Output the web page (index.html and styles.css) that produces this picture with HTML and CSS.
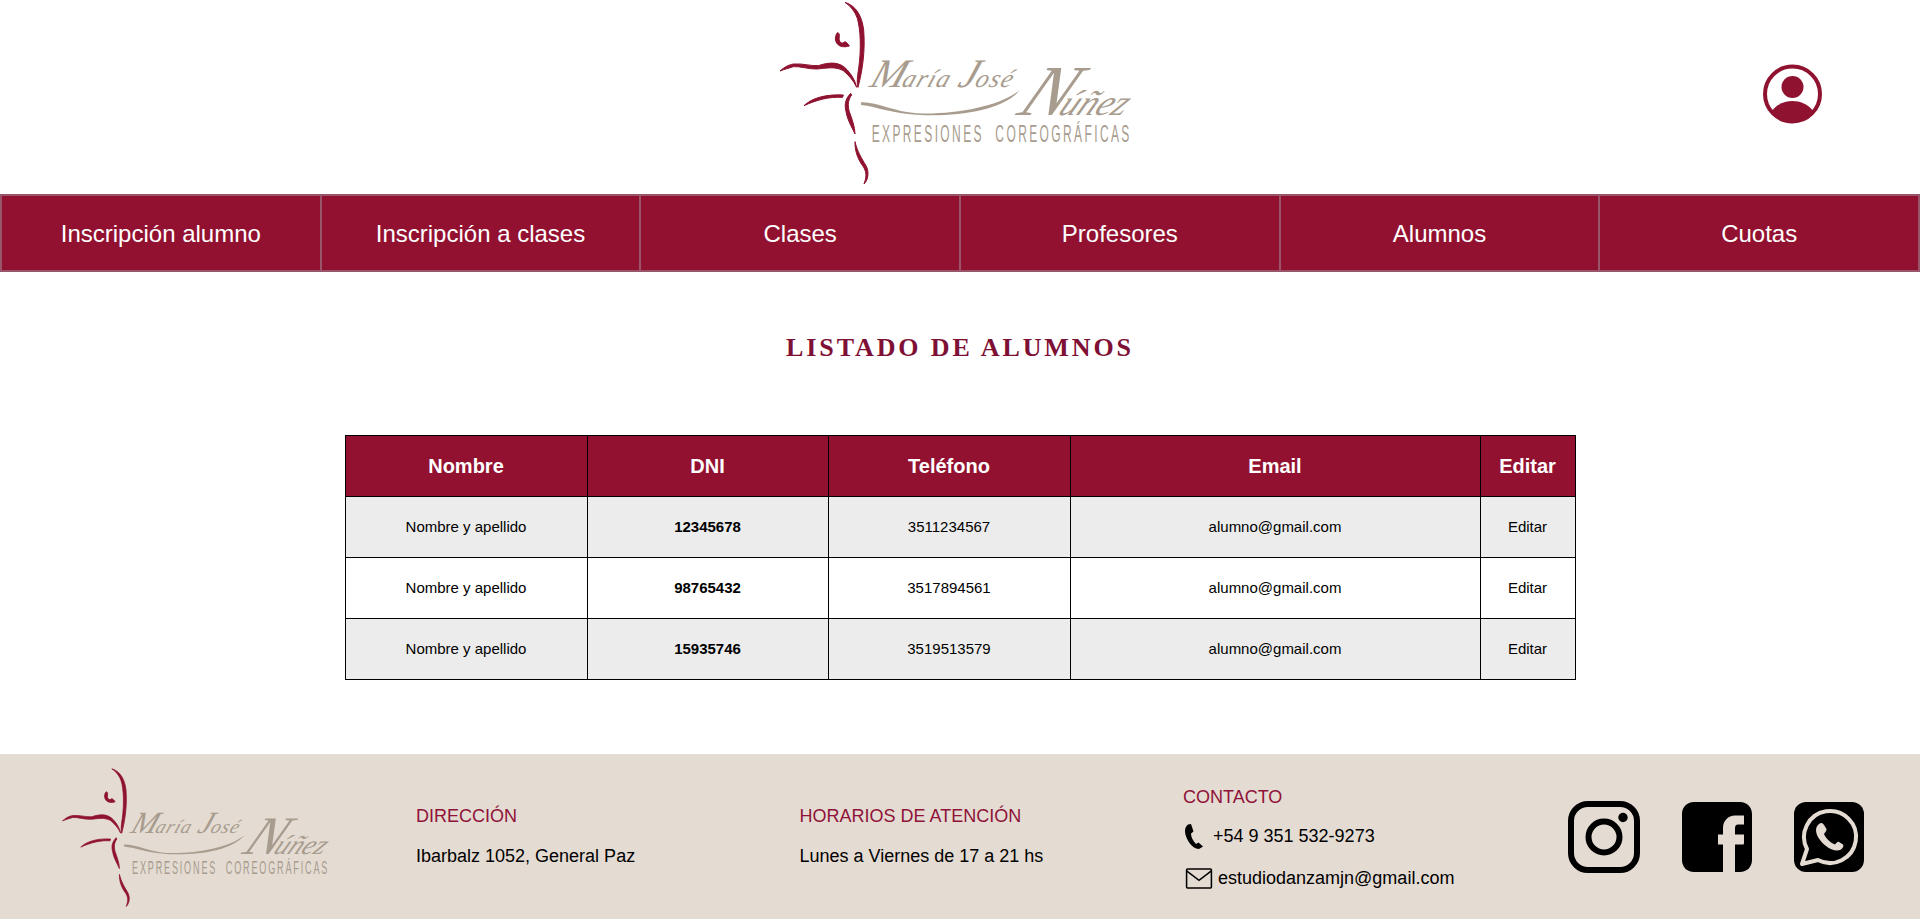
FILE: index.html
```html
<!DOCTYPE html>
<html lang="es">
<head>
<meta charset="utf-8">
<title>Listado de alumnos</title>
<link rel="stylesheet" href="styles.css">
</head>
<body>
<header class="top">
  <svg class="logo" viewBox="0 0 1200 570" aria-label="María José Núñez">
    <g class="wine figure">
      <path d="M255 7C290 18 306 50 311 90C316 150 308 210 294 262C290 250 292 230 296 205C304 150 302 90 292 55C285 35 272 18 255 7Z"/>
      <path d="M60 213C75 200 85 195 100 192C130 190 150 198 175 197C210 185 240 185 262 210C275 225 285 240 290 262C280 240 265 225 250 212C225 198 200 205 170 207C145 208 120 198 100 200C85 205 75 207 60 213Z"/>
      <path d="M132 317C155 295 195 282 250 285L248 292C205 290 170 300 132 317Z"/>
      <path d="M272 280C258 295 252 310 258 335C262 360 275 380 285 402C285 380 275 355 268 335C262 315 265 298 275 285Z"/>
      <path d="M232 98C222 112 225 130 240 138C250 142 262 140 268 138C262 128 255 122 250 128C245 132 235 125 238 112C238 105 240 100 232 98Z"/>
      <path d="M285 425C284 455 295 480 310 500C322 520 318 535 312 552C325 540 328 515 318 497C305 475 292 455 285 425Z"/>
    </g>
    <path class="tan" d="M303 307C350 305 400 335 470 340C580 345 720 320 780 270C730 330 600 350 480 345C400 342 350 320 303 315Z"/>
    <text class="tan logo-small" transform="translate(325 260) skewX(-20)"><tspan class="logo-cap">M</tspan><tspan dx="-8">aría</tspan><tspan class="logo-cap" dx="24">J</tspan><tspan dx="-6">osé</tspan></text>
    <text class="tan logo-low" transform="translate(765 345) skewX(-28)"><tspan class="logo-big">N</tspan><tspan dx="-18">úñez</tspan></text>
    <text class="tan logo-sub" transform="translate(335 425) scale(.5 1)" textLength="1546" lengthAdjust="spacing">EXPRESIONES&#160;&#160;COREOGRÁFICAS</text>
  </svg>
  <svg class="user" viewBox="0 0 59 60" aria-label="Usuario">
    <circle class="ring" cx="29.500" cy="30" r="27.500"/>
    <circle class="wine" cx="29.500" cy="23" r="11"/>
    <path class="wine" d="M9 47C14 40 22 37 29.500 37C37 37 45 40 50 47C45 54 37 58 29.500 58C22 58 14 54 9 47Z"/>
  </svg>
</header>

<nav class="menu">
  <a class="menu-item" href="#">Inscripción alumno</a>
  <a class="menu-item" href="#">Inscripción a clases</a>
  <a class="menu-item" href="#">Clases</a>
  <a class="menu-item" href="#">Profesores</a>
  <a class="menu-item" href="#">Alumnos</a>
  <a class="menu-item" href="#">Cuotas</a>
</nav>

<main class="content">
  <h1 class="title">LISTADO DE ALUMNOS</h1>
  <table class="list">
    <thead>
      <tr>
        <th class="c-name">Nombre</th>
        <th class="c-dni">DNI</th>
        <th class="c-tel">Teléfono</th>
        <th class="c-mail">Email</th>
        <th class="c-edit">Editar</th>
      </tr>
    </thead>
    <tbody>
      <tr><td>Nombre y apellido</td><td class="strong">12345678</td><td>3511234567</td><td>alumno@gmail.com</td><td>Editar</td></tr>
      <tr><td>Nombre y apellido</td><td class="strong">98765432</td><td>3517894561</td><td>alumno@gmail.com</td><td>Editar</td></tr>
      <tr><td>Nombre y apellido</td><td class="strong">15935746</td><td>3519513579</td><td>alumno@gmail.com</td><td>Editar</td></tr>
    </tbody>
  </table>
</main>

<footer class="foot">
  <svg class="foot-logo" viewBox="0 0 1200 570" aria-label="María José Núñez">
    <g class="wine figure">
      <path d="M255 7C290 18 306 50 311 90C316 150 308 210 294 262C290 250 292 230 296 205C304 150 302 90 292 55C285 35 272 18 255 7Z"/>
      <path d="M60 213C75 200 85 195 100 192C130 190 150 198 175 197C210 185 240 185 262 210C275 225 285 240 290 262C280 240 265 225 250 212C225 198 200 205 170 207C145 208 120 198 100 200C85 205 75 207 60 213Z"/>
      <path d="M132 317C155 295 195 282 250 285L248 292C205 290 170 300 132 317Z"/>
      <path d="M272 280C258 295 252 310 258 335C262 360 275 380 285 402C285 380 275 355 268 335C262 315 265 298 275 285Z"/>
      <path d="M232 98C222 112 225 130 240 138C250 142 262 140 268 138C262 128 255 122 250 128C245 132 235 125 238 112C238 105 240 100 232 98Z"/>
      <path d="M285 425C284 455 295 480 310 500C322 520 318 535 312 552C325 540 328 515 318 497C305 475 292 455 285 425Z"/>
    </g>
    <path class="tan" d="M303 307C350 305 400 335 470 340C580 345 720 320 780 270C730 330 600 350 480 345C400 342 350 320 303 315Z"/>
    <text class="tan logo-small" transform="translate(325 260) skewX(-20)"><tspan class="logo-cap">M</tspan><tspan dx="-8">aría</tspan><tspan class="logo-cap" dx="24">J</tspan><tspan dx="-6">osé</tspan></text>
    <text class="tan logo-low" transform="translate(765 345) skewX(-28)"><tspan class="logo-big">N</tspan><tspan dx="-18">úñez</tspan></text>
    <text class="tan logo-sub" transform="translate(335 425) scale(.5 1)" textLength="1546" lengthAdjust="spacing">EXPRESIONES&#160;&#160;COREOGRÁFICAS</text>
  </svg>
  <section class="foot-col">
    <h2 class="foot-head">DIRECCIÓN</h2>
    <p class="foot-line">Ibarbalz 1052, General Paz</p>
  </section>
  <section class="foot-col">
    <h2 class="foot-head">HORARIOS DE ATENCIÓN</h2>
    <p class="foot-line">Lunes a Viernes de 17 a 21 hs</p>
  </section>
  <section class="foot-col contact">
    <h2 class="foot-head">CONTACTO</h2>
    <p class="foot-line with-icon">
      <svg class="phone" viewBox="0 0 18 25"><path d="M3 .5L6 0L8.500 7.500L6 9.500C6 13 8 17 11 20L13.500 18.500L18 22.500L14 25C7 25 0 14 0 7C0 4 1 2 3 .5Z"/></svg>
      +54 9 351 532-9273
    </p>
    <p class="foot-line with-icon">
      <svg class="mail" viewBox="0 0 28 22"><rect x="1" y="1" width="26" height="20" rx="1"/><path d="M1 3L14 13L27 3"/></svg>
      estudiodanzamjn@gmail.com
    </p>
  </section>
  <div class="social">
    <svg class="ig" viewBox="0 0 72 72" aria-label="Instagram">
      <rect x="3" y="3" width="66" height="66" rx="17"/>
      <circle cx="36" cy="36" r="15.500"/>
      <circle class="dot" cx="55" cy="16.500" r="4.700"/>
    </svg>
    <svg class="fb" viewBox="0 0 70 70" aria-label="Facebook">
      <path d="M12 0H58C65 0 70 5 70 12V58C70 65 65 70 58 70H53V42.500H60.500C61.500 42.500 62 42 62 41V32.500H53V26C53 24 54 22.500 56 22.500H62V13.500H53C46 13.500 41 19 41 26V32.500H36V42.500H41V70H12C5 70 0 65 0 58V12C0 5 5 0 12 0Z"/>
    </svg>
    <svg class="wa" viewBox="0 0 70 70" aria-label="WhatsApp">
      <rect width="70" height="70" rx="12"/>
      <path class="wa-ring" d="M13 47A26 26 0 1 1 24 58L8 62Z"/>
      <path class="wa-phone" d="M25 22C27 20 29 21 30 23L32.500 27C33 29 31 30 30 32C32 37 37 41 41 42.500C42.500 41 43.500 39 45 40L49 42.500C50 44 49 46 47 47.500C43 50 37 48 32 44C27 40 22 34 22 28C22 26 23 23.500 25 22Z"/>
    </svg>
  </div>
</footer>
</body>
</html>
```

FILE: styles.css
```css
* { box-sizing: border-box; }

html, body {
  margin: 0;
  padding: 0;
  background: #fff;
  font-family: "Liberation Sans", Arial, sans-serif;
  color: #000;
}

body {
  height: 919px;
  display: flex;
  flex-direction: column;
  overflow: hidden;
}

.wine { fill: #8f1230; }
.tan { fill: #a89c8e; }
.figure { stroke: #8f1230; stroke-width: 3; stroke-linejoin: round; }
.logo-small { font: italic 400 76px "Liberation Serif", serif; letter-spacing: 4px; }
.logo-cap { font-size: 122px; }
.logo-low { font: italic 400 108px "Liberation Serif", serif; }
.logo-big { font-size: 215px; }
.logo-sub { font: 400 72px "Liberation Sans", sans-serif; }

.top {
  height: 194px;
  display: flex;
  justify-content: center;
  position: relative;
}

.logo { width: 400px; height: 190px; }

.user {
  position: absolute;
  left: 1763px;
  top: 64px;
  width: 59px;
  height: 60px;
}

.ring { fill: none; stroke: #8f1230; stroke-width: 4; }

.menu {
  height: 78px;
  display: grid;
  grid-template-columns: repeat(6, 1fr);
  background: #931130;
  border: 1px solid #99566a;
}

.menu-item {
  display: flex;
  align-items: center;
  justify-content: center;
  padding-top: 2px;
  border: 1px solid #99566a;
  color: #fff;
  font-size: 24px;
  text-decoration: none;
}

.content {
  flex: 1;
  display: flex;
  flex-direction: column;
  align-items: center;
}

.title {
  margin: 58px 0 0;
  height: 36px;
  color: #7f1035;
  font: 700 26px/36px "Liberation Serif", serif;
  letter-spacing: 2.900px;
}

.list {
  margin-top: 69px;
  width: 1230px;
  table-layout: fixed;
  border-collapse: collapse;
  font-size: 15px;
  text-align: center;
}

.list th, .list td {
  border: 1px solid #000;
  padding: 0;
  height: 61px;
}

.list td { padding-bottom: 2px; }

.list th {
  background: #931130;
  color: #fff;
  font-size: 20px;
  font-weight: 700;
}

.list tbody tr:nth-child(odd) td { background: #ececec; }

.strong { font-weight: 700; }

.c-name { width: 242px; }
.c-dni { width: 241px; }
.c-tel { width: 242px; }
.c-mail { width: 410px; }
.c-edit { width: 95px; }

.foot {
  height: 165px;
  display: flex;
  align-items: center;
  padding-left: 47px;
  background: #e4dbd2;
  font-size: 18px;
}

.foot-logo {
  width: 304px;
  height: 144px;
  margin: 4px 65px 0 0;
  flex: none;
}

.foot-col {
  width: 383.500px;
  flex: none;
  display: flex;
  flex-direction: column;
  gap: 19px;
}

.contact { padding-top: 2.500px; }
.contact .foot-head { margin-bottom: -2.500px; }

.foot-head {
  margin: 0;
  color: #8f1238;
  font-size: 18px;
  line-height: 21px;
  font-weight: 400;
}

.foot-line {
  margin: 0;
  line-height: 21px;
}

.with-icon {
  display: flex;
  align-items: center;
}

.phone { width: 18px; height: 25px; margin: 0 10px 0 2px; }
.mail { width: 28px; height: 21px; margin: 0 5px 0 2px; fill: none; stroke: #000; stroke-width: 1.600; }

.social {
  display: flex;
  align-items: center;
  gap: 42px;
  margin-left: 1px;
}

.ig { width: 72px; height: 72px; fill: none; stroke: #000; stroke-width: 6; }
.ig .dot { fill: #000; stroke: none; }
.fb { width: 70px; height: 70px; }
.wa { width: 70px; height: 70px; }
.wa-ring { fill: none; stroke: #e4dbd2; stroke-width: 4; stroke-linejoin: round; }
.wa-phone { fill: #e4dbd2; }
```
